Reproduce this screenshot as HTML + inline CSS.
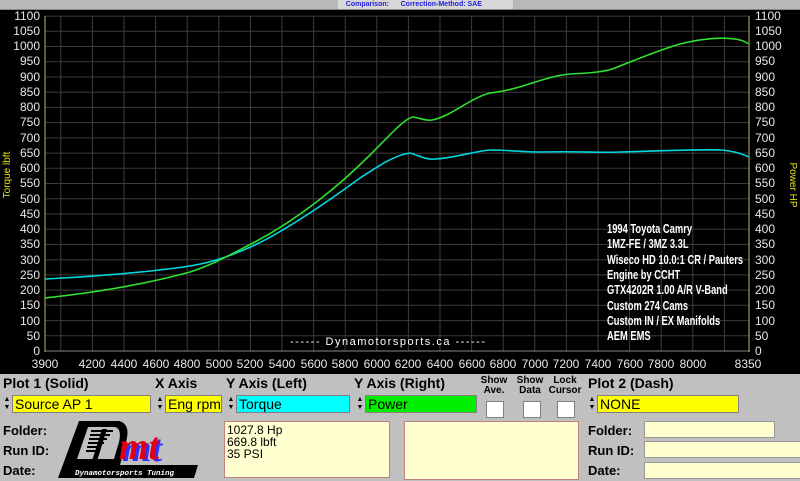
<!DOCTYPE html>
<html><head><meta charset="utf-8"><style>
body{margin:0;width:800px;height:481px;overflow:hidden;background:#c0c0c0;font-family:"Liberation Sans",sans-serif;position:relative}
.a{position:absolute}
.lbl{font-weight:bold;font-size:14px;color:#000}
.sm{font-weight:bold;font-size:10px;line-height:10px;color:#000;text-align:center}
.fld{position:absolute;height:16px;border:1px solid #808080;font-size:14px;line-height:16px;padding-left:2px}
.spin{position:absolute;width:8px;height:18px;font-size:7px;line-height:8px;color:#000;text-align:center}
.box{position:absolute;background:#fff;border:1px solid #808080;width:16px;height:15px}
.cr{position:absolute;background:#ffffd0;border:1px solid #999}
</style></head><body>
<div class="a" style="left:0;top:0;width:800px;height:9px;background:#b8b8b8;border-bottom:1px solid #888"></div>
<div class="a" style="left:338px;top:0;width:175px;height:9px;background:#d8d8d8;font-size:7px;line-height:9px;color:#2020e0;font-weight:bold;white-space:pre">    Comparison:      Correction-Method: SAE</div>
<svg class="a" style="left:0;top:10px" width="800" height="362" viewBox="0 10 800 362">
<rect x="0" y="10" width="800" height="362" fill="#000"/>
<g stroke="#3c3c3c" stroke-width="1">
<path d="M45 335.8H750M45 320.6H750M45 305.3H750M45 290.1H750M45 274.9H750M45 259.7H750M45 244.4H750M45 229.2H750M45 214H750M45 198.8H750M45 183.5H750M45 168.3H750M45 153.1H750M45 137.9H750M45 122.6H750M45 107.4H750M45 92.2H750M45 77H750M45 61.7H750M45 46.5H750M45 31.3H750M45 16.1H750"/>
<path d="M60.8 16V351M92.4 16V351M124 16V351M155.6 16V351M187.2 16V351M218.8 16V351M250.4 16V351M282 16V351M313.6 16V351M345.2 16V351M376.8 16V351M408.4 16V351M440 16V351M471.6 16V351M503.2 16V351M534.8 16V351M566.4 16V351M598 16V351M629.6 16V351M661.2 16V351M692.8 16V351M724.4 16V351"/>
</g>
<line x1="45" y1="16" x2="45" y2="352" stroke="#807840" stroke-width="1.5"/>
<line x1="749" y1="16" x2="749" y2="352" stroke="#807840" stroke-width="1.5"/>
<line x1="45" y1="351" x2="750" y2="351" stroke="#888"/>
<path d="M45 279 C100 276 150 272 190 266 C215 262 235 254 255 245 C290 228 330 200 360 178 C380 165 395 155 410 153 C418 155 425 160 435 159 C455 158 475 151 490 150 C510 150 520 152 540 152 C580 151 600 153 620 152 C660 151 700 149 720 150 C735 151 742 154 749 157" fill="none" stroke="#00d8e0" stroke-width="1.6"/>
<path d="M45 298 C100 292 150 283 190 272 C215 264 235 252 255 242 C300 218 340 185 370 155 C390 135 405 118 413 117 C420 118 425 121 432 120 C450 117 470 98 490 93 C520 90 545 76 570 74 C590 73 605 72 615 68 C640 58 660 50 680 44 C700 39 720 37 735 39 C742 40 746 42 749 44" fill="none" stroke="#30e030" stroke-width="1.6"/>
<g font-family="Liberation Sans" font-size="12" fill="#e8e8e8" text-anchor="end">
<text x="40" y="355">0</text><text x="40" y="340">50</text><text x="40" y="325">100</text><text x="40" y="309">150</text><text x="40" y="294">200</text><text x="40" y="279">250</text><text x="40" y="264">300</text><text x="40" y="248">350</text><text x="40" y="233">400</text><text x="40" y="218">450</text><text x="40" y="203">500</text><text x="40" y="187">550</text><text x="40" y="172">600</text><text x="40" y="157">650</text><text x="40" y="142">700</text><text x="40" y="126">750</text><text x="40" y="111">800</text><text x="40" y="96">850</text><text x="40" y="81">900</text><text x="40" y="65">950</text><text x="40" y="50">1000</text><text x="40" y="35">1050</text><text x="40" y="20">1100</text>
</g>
<g font-family="Liberation Sans" font-size="12" fill="#e8e8e8">
<text x="755" y="355">0</text><text x="755" y="340">50</text><text x="755" y="325">100</text><text x="755" y="309">150</text><text x="755" y="294">200</text><text x="755" y="279">250</text><text x="755" y="264">300</text><text x="755" y="248">350</text><text x="755" y="233">400</text><text x="755" y="218">450</text><text x="755" y="203">500</text><text x="755" y="187">550</text><text x="755" y="172">600</text><text x="755" y="157">650</text><text x="755" y="142">700</text><text x="755" y="126">750</text><text x="755" y="111">800</text><text x="755" y="96">850</text><text x="755" y="81">900</text><text x="755" y="65">950</text><text x="755" y="50">1000</text><text x="755" y="35">1050</text><text x="755" y="20">1100</text>
</g>
<g font-family="Liberation Sans" font-size="12" fill="#e8e8e8" text-anchor="middle">
<text x="45" y="368">3900</text><text x="92" y="368">4200</text><text x="124" y="368">4400</text><text x="156" y="368">4600</text><text x="187" y="368">4800</text><text x="219" y="368">5000</text><text x="250" y="368">5200</text><text x="282" y="368">5400</text><text x="314" y="368">5600</text><text x="345" y="368">5800</text><text x="377" y="368">6000</text><text x="408" y="368">6200</text><text x="440" y="368">6400</text><text x="472" y="368">6600</text><text x="503" y="368">6800</text><text x="535" y="368">7000</text><text x="566" y="368">7200</text><text x="598" y="368">7400</text><text x="630" y="368">7600</text><text x="661" y="368">7800</text><text x="693" y="368">8000</text><text x="748" y="368">8350</text>
</g>
<text transform="translate(10 175) rotate(-90)" font-family="Liberation Sans" font-size="10" fill="#e0e020" text-anchor="middle">Torque lbft</text>
<text transform="translate(790 185) rotate(90)" font-family="Liberation Sans" font-size="10" fill="#e0e020" text-anchor="middle">Power HP</text>
<g font-family="Liberation Sans" font-size="13" font-weight="bold" fill="#fff" transform="translate(607 0) scale(0.72 1)">
<text x="0" y="233">1994 Toyota Camry</text><text x="0" y="248">1MZ-FE / 3MZ 3.3L</text><text x="0" y="264">Wiseco HD 10.0:1 CR / Pauters</text><text x="0" y="279">Engine by CCHT</text><text x="0" y="294">GTX4202R 1.00 A/R V-Band</text><text x="0" y="310">Custom 274 Cams</text><text x="0" y="325">Custom IN / EX Manifolds</text><text x="0" y="340">AEM EMS</text>
</g>
<text x="290" y="345" font-family="Liberation Sans" font-size="11" fill="#fff" letter-spacing="1.5">------ Dynamotorsports.ca ------</text>
</svg>
<div class="a" style="left:0;top:372px;width:800px;height:2px;background:#000"></div>
<div class="a lbl" style="left:3px;top:375px">Plot 1 (Solid)</div>
<div class="a lbl" style="left:155px;top:375px">X Axis</div>
<div class="a lbl" style="left:226px;top:375px">Y Axis (Left)</div>
<div class="a lbl" style="left:354px;top:375px">Y Axis (Right)</div>
<div class="a sm" style="left:475px;top:376px;width:38px">Show<br>Ave.</div>
<div class="a sm" style="left:512px;top:376px;width:36px">Show<br>Data</div>
<div class="a sm" style="left:544px;top:376px;width:42px">Lock<br>Cursor</div>
<div class="a lbl" style="left:588px;top:375px">Plot 2 (Dash)</div>
<div class="spin" style="left:3px;top:396px">▲<br>▼</div>
<div class="fld" style="left:12px;top:395px;width:135px;background:#ffff00">Source AP 1</div>
<div class="spin" style="left:156px;top:396px">▲<br>▼</div>
<div class="fld" style="left:165px;top:395px;width:53px;background:#ffff00;overflow:hidden">Eng rpm</div>
<div class="spin" style="left:227px;top:396px">▲<br>▼</div>
<div class="fld" style="left:236px;top:395px;width:110px;background:#00ffff">Torque</div>
<div class="spin" style="left:356px;top:396px">▲<br>▼</div>
<div class="fld" style="left:365px;top:395px;width:108px;background:#00ee00">Power</div>
<div class="box" style="left:486px;top:401px"></div>
<div class="box" style="left:523px;top:401px"></div>
<div class="box" style="left:557px;top:401px"></div>
<div class="spin" style="left:588px;top:396px">▲<br>▼</div>
<div class="fld" style="left:597px;top:395px;width:138px;background:#ffff00">NONE</div>
<div class="a lbl" style="left:3px;top:423px;font-size:13px">Folder:</div>
<div class="a lbl" style="left:3px;top:443px;font-size:13px">Run ID:</div>
<div class="a lbl" style="left:3px;top:463px;font-size:13px">Date:</div>
<svg class="a" style="left:55px;top:415px" width="160" height="66" viewBox="0 0 160 66">
<path d="M24 6 L64 6 Q76 9 71 27 L65 50 L143 50 L139 63 L3 63 Z" fill="#000"/>
<path d="M33 12 L60 12 Q67 14 64 27 L59 44 L22 44 Z" fill="#c0c0c0"/>
<g fill="#000"><rect x="36" y="15" width="22" height="2"/><rect x="35" y="19" width="20" height="2"/><rect x="34" y="23" width="18" height="2"/><rect x="33" y="27" width="16" height="2"/><rect x="32" y="31" width="14" height="2"/><rect x="31" y="35" width="12" height="2"/></g>
<path d="M47 14 L52 14 L42 46 L37 46 Z" fill="#000"/>
<text x="67" y="46" font-family="Liberation Serif" font-style="italic" font-weight="bold" font-size="38" fill="#3030ff">mt</text>
<text x="64" y="44" font-family="Liberation Serif" font-style="italic" font-weight="bold" font-size="38" fill="#e00010">mt</text>
<text x="20" y="60" font-family="Liberation Mono" font-style="italic" font-weight="bold" font-size="7.5" fill="#fff">Dynamotorsports Tuning</text>
</svg>
<div class="cr" style="left:224px;top:421px;width:166px;height:57px;border-color:#c08080;font-size:12px;line-height:12px;padding:2px 2px 0;box-sizing:border-box">1027.8 Hp<br>669.8 lbft<br>35 PSI</div>
<div class="cr" style="left:404px;top:421px;width:173px;height:57px;border-color:#c08080"></div>
<div class="a lbl" style="left:588px;top:423px;font-size:13px">Folder:</div>
<div class="a lbl" style="left:588px;top:443px;font-size:13px">Run ID:</div>
<div class="a lbl" style="left:588px;top:463px;font-size:13px">Date:</div>
<div class="cr" style="left:644px;top:421px;width:129px;height:15px"></div>
<div class="cr" style="left:644px;top:441px;width:156px;height:15px"></div>
<div class="cr" style="left:644px;top:462px;width:156px;height:15px"></div>
</body></html>
